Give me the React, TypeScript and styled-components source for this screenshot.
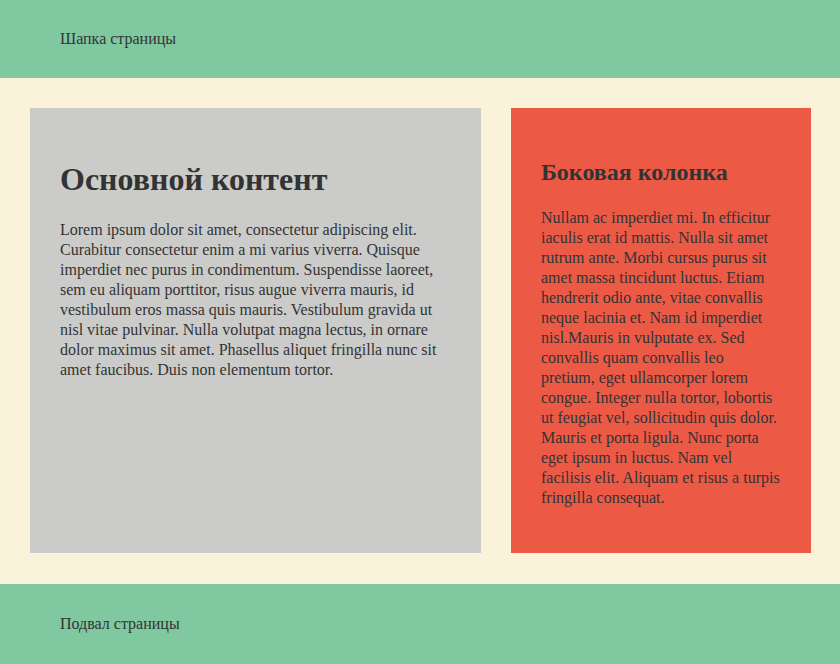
import * as React from 'react';
import styled, { createGlobalStyle } from 'styled-components';

const GlobalStyle = createGlobalStyle`
  html, body {
    margin: 0;
    padding: 0;
  }

  body {
    background-color: #faf3d9;
    color: #333;
    font-family: "Liberation Serif", "Times New Roman", serif;
    font-size: 16px;
  }
`;

const Page = styled.div`
  width: 840px;
  height: 664px;
  display: flex;
  flex-direction: column;
  background-color: #faf3d9;
`;

const Band = styled.div<{ $height: number }>`
  height: ${p => p.$height}px;
  box-sizing: border-box;
  padding: 0 60px;
  display: flex;
  align-items: center;
  background-color: #80c8a0;
  font-size: 16px;
`;

const Content = styled.div`
  flex: 1;
  display: grid;
  grid-template-columns: 451px 300px;
  gap: 30px;
  padding: 30px 29px 31px 30px;
`;

const Panel = styled.section<{ $bg: string }>`
  background-color: ${p => p.$bg};
  padding: 30px;

  h1, h2 {
    margin: 0;
    font-weight: bold;
  }

  p {
    margin: 0;
    line-height: 20px;
  }
`;

const Title = styled.h1`
  font-size: 32px;
  padding-top: 23px;
  padding-bottom: 22px;
`;

const SubTitle = styled.h2`
  font-size: 24px;
  padding-top: 21px;
  padding-bottom: 22px;
`;

const App = () => (
  <>
    <GlobalStyle />
    <Page>
      <Band $height={78}>Шапка страницы</Band>
      <Content>
        <Panel $bg="#cbccc9">
          <Title>Основной контент</Title>
          <p>
            Lorem ipsum dolor sit amet, consectetur adipiscing elit. Curabitur consectetur enim a mi varius viverra. Quisque imperdiet nec purus in condimentum. Suspendisse laoreet, sem eu aliquam porttitor, risus augue viverra mauris, id vestibulum eros massa quis mauris. Vestibulum gravida ut nisl vitae pulvinar. Nulla volutpat magna lectus, in ornare dolor maximus sit amet. Phasellus aliquet fringilla nunc sit amet faucibus. Duis non elementum tortor.
          </p>
        </Panel>
        <Panel $bg="#ec5a46">
          <SubTitle>Боковая колонка</SubTitle>
          <p>
            Nullam ac imperdiet mi. In efficitur iaculis erat id mattis. Nulla sit amet rutrum ante. Morbi cursus purus sit amet massa tincidunt luctus. Etiam hendrerit odio ante, vitae convallis neque lacinia et. Nam id imperdiet nisl.Mauris in vulputate ex. Sed convallis quam convallis leo pretium, eget ullamcorper lorem congue. Integer nulla tortor, lobortis ut feugiat vel, sollicitudin quis dolor. Mauris et porta ligula. Nunc porta eget ipsum in luctus. Nam vel facilisis elit. Aliquam et risus a turpis fringilla consequat.
          </p>
        </Panel>
      </Content>
      <Band $height={80}>Подвал страницы</Band>
    </Page>
  </>
);

export default App;
